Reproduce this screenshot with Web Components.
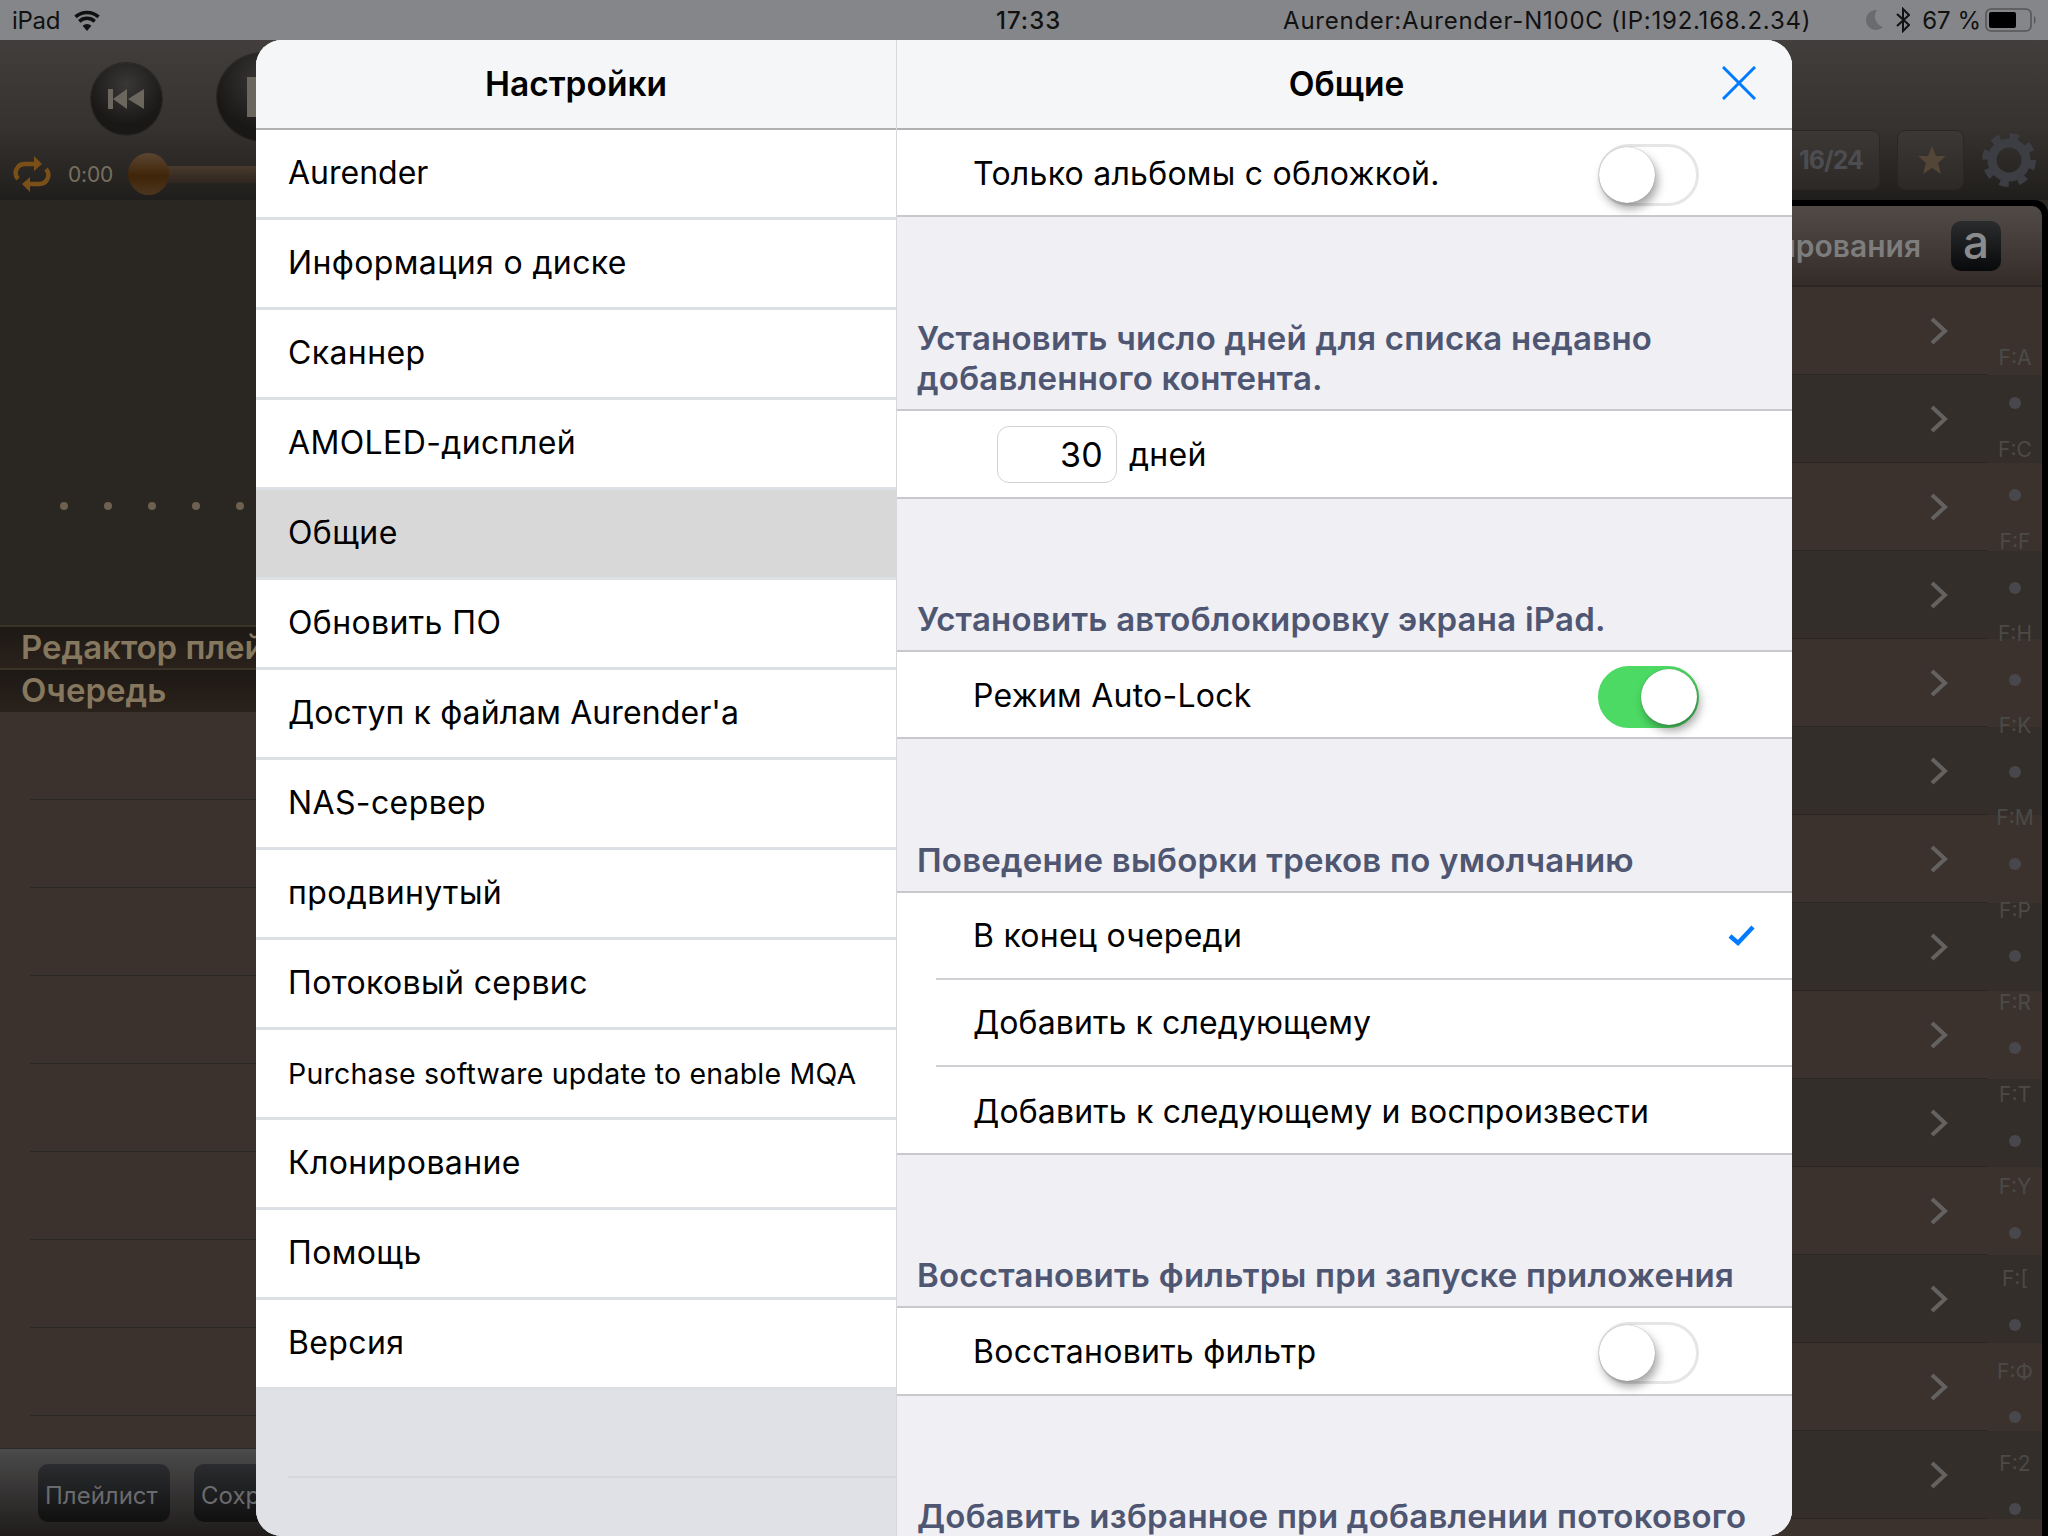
<!DOCTYPE html>
<html lang="ru">
<head>
<meta charset="utf-8">
<title>Настройки</title>
<style>
html,body{margin:0;padding:0;width:2048px;height:1536px;overflow:hidden;background:#2a2722;font-family:Inter,"Liberation Sans",sans-serif}
</style>
</head>
<body>
<ipad-status>
  <span slot="left">iPad</span>
  <span slot="center">17:33</span>
  <span slot="right">Aurender:Aurender-N100C (IP:192.168.2.34)</span>
</ipad-status>
<player-app></player-app>
<settings-modal>
  <span slot="left-title">Настройки</span>
  <span slot="right-title">Общие</span>
  <nav-row slot="nav" style="--ls:0">Aurender</nav-row>
  <nav-row slot="nav">Информация о диске</nav-row>
  <nav-row slot="nav">Сканнер</nav-row>
  <nav-row slot="nav">AMOLED-дисплей</nav-row>
  <nav-row slot="nav" selected>Общие</nav-row>
  <nav-row slot="nav">Обновить ПО</nav-row>
  <nav-row slot="nav" style="--ls:.1px">Доступ к файлам Aurender'а</nav-row>
  <nav-row slot="nav">NAS-сервер</nav-row>
  <nav-row slot="nav">продвинутый</nav-row>
  <nav-row slot="nav">Потоковый сервис</nav-row>
  <nav-row slot="nav" small>Purchase software update to enable MQA</nav-row>
  <nav-row slot="nav">Клонирование</nav-row>
  <nav-row slot="nav">Помощь</nav-row>
  <nav-row slot="nav">Версия</nav-row>

  <setting-row>Только альбомы с обложкой.<ios-switch slot="end"></ios-switch></setting-row>
  <section-head style="height:194px">Установить число дней для списка недавно добавленного контента.</section-head>
  <days-row>дней</days-row>
  <section-head>Установить автоблокировку экрана iPad.</section-head>
  <setting-row>Режим Auto-Lock<ios-switch slot="end" on></ios-switch></setting-row>
  <section-head>Поведение выборки треков по умолчанию</section-head>
  <setting-row inset>В конец очереди<check-mark slot="end"></check-mark></setting-row>
  <setting-row inset style="--ls:.1px">Добавить к следующему</setting-row>
  <setting-row style="--ls:.16px">Добавить к следующему и воспроизвести</setting-row>
  <section-head>Восстановить фильтры при запуске приложения</section-head>
  <setting-row>Восстановить фильтр<ios-switch slot="end"></ios-switch></setting-row>
  <section-head>Добавить избранное при добавлении потокового</section-head>
</settings-modal>

<script>
// each element just gets its markup set in an open shadow root
function define(tag, html) {
    customElements.define(tag, class extends HTMLElement {
        constructor() {
            super();
            this.attachShadow({mode: 'open'}).innerHTML = html;
        }
    });
}

define('ipad-status', `<style>
:host{display:flex;align-items:center;height:40px;background:#85868a;color:#111;font-size:24px;position:relative;padding:0 11px 0 12px;box-sizing:border-box}
.left{display:flex;align-items:center;gap:12px;letter-spacing:-.3px}
.center{position:absolute;left:996px;font-weight:500;letter-spacing:1px}
.right{margin-left:auto;display:flex;align-items:center}
.host{margin-right:55px;letter-spacing:.75px}
.pct{margin:0 4px 0 12px}
svg{display:block}
</style>
<div class="left"><slot name="left"></slot>
<svg width="30" height="23" viewBox="0 0 28 22"><path d="M14 21l-4.2-5a6 6 0 0 1 8.4 0z" fill="#111"/><path d="M6.6 12.2a11 11 0 0 1 14.8 0M3 8a16.5 16.5 0 0 1 22 0" transform="translate(0 -.4)" fill="none" stroke="#111" stroke-width="3.4"/></svg></div>
<div class="center"><slot name="center"></slot></div>
<div class="right"><span class="host"><slot name="right"></slot></span>
<svg width="18" height="22" viewBox="0 0 18 22" style="margin-right:12px"><path d="M11 1a10 10 0 1 0 6 17A11 11 0 0 1 11 1z" fill="#6a6b6f"/></svg>
<svg width="14" height="26" viewBox="0 0 14 26"><path d="M1 7l12 11-6 6V2l6 6L1 19" fill="none" stroke="#111" stroke-width="2"/></svg>
<span class="pct">67 %</span>
<svg width="52" height="24" viewBox="0 0 52 24"><rect x="1" y="1" width="45" height="22" rx="5" fill="none" stroke="#555" stroke-width="1.6"/><rect x="4" y="4" width="27" height="16" rx="2" fill="#000"/><path d="M49 8c2 1 2 7 0 8z" fill="#555"/></svg>
</div>`);

define('round-button', `<style>
:host{display:flex;align-items:center;justify-content:center;border-radius:50%;background:radial-gradient(circle at 50% 30%,#3a3836,#191816 65%);box-shadow:0 0 0 1px #2a2826}
</style><slot></slot>`);

define('player-top', `<style>
:host{display:flex;justify-content:space-between;height:160px;background:linear-gradient(#413e3d,#35322f 55%,#201e1c);overflow:hidden}
.ctl{display:flex;flex-direction:column}
.btns{display:flex;gap:55px;padding:23px 0 0 91px;height:78px;align-items:flex-start}
.seek{display:flex;align-items:center;margin-top:12px;padding-left:13px;height:42px}
.time{color:#77705f;font-size:21px;margin:0 17px 0 17px;letter-spacing:-.2px}
.knob{width:41px;height:42px;border-radius:50%;background:linear-gradient(#5c4632,#3f2508 55%,#4c3620);margin-right:-2px;position:relative}
.track{width:900px;height:17px;background:linear-gradient(#4a3a2c,#2e2620)}
.tools{display:flex;align-items:center;gap:17px;padding:90px 12px 0 0;height:60px}
.btn{height:60px;box-sizing:border-box;border:1px solid #2a2725;border-radius:8px;background:linear-gradient(#3c3835,#2c2926);display:flex;align-items:center;justify-content:center;color:#4c4d50;font-size:25px;font-weight:700;letter-spacing:-1px}
.count{width:120px;justify-content:flex-end;padding-right:16px}
.star{width:67px}
</style>
<div class="ctl">
<div class="btns">
<round-button style="width:71px;height:72px"><svg width="38" height="24" viewBox="0 0 38 24"><path d="M0 2h5v20H0zM19 2v20L5 12zM36 2v20L20 12z" fill="#6c675e"/></svg></round-button>
<round-button style="width:92px;height:88px;margin-top:-10px"><svg width="40" height="44" viewBox="0 0 40 44"><path d="M4 2h20v40H4z" fill="#6c675e"/></svg></round-button>
</div>
<div class="seek">
<svg width="38" height="42" viewBox="0 0 38 42"><g fill="none" stroke="#7a5018" stroke-width="4.5"><path d="M22 11H12a9 9 0 0 0-7 15"/><path d="M16 31h10a9 9 0 0 0 7-15"/></g><path d="M21 3l8 8-8 7zM17 39l-8-8 8-7z" fill="#7a5018"/></svg>
<span class="time">0:00</span><div class="knob" style="margin-left:-2px"></div><div class="track"></div>
</div>
</div>
<div class="tools">
<div class="btn count">16/24</div>
<div class="btn star"><svg width="30" height="30" viewBox="0 0 30 30" style="margin-left:2px"><path d="M15 1l4 10h10l-8 7 3 11-9-6-9 6 3-11-8-7h10z" fill="#544636"/></svg></div>
<svg width="54" height="54" viewBox="0 0 54 54" style="margin-left:1px"><circle cx="27" cy="27" r="17" fill="none" stroke="#3c3e44" stroke-width="9"/><circle cx="27" cy="27" r="23.5" fill="none" stroke="#3c3e44" stroke-width="7" stroke-dasharray="9 9.46"/></svg>
</div>`);

define('queue-list', `<style>
:host{display:block;flex:1;background:#3b322d;overflow:hidden}
.line{height:87px;margin-left:30px;border-bottom:1px solid #2b2723}
</style>` + '<div class="line"></div>'.repeat(8));

define('tab-band', `<style>
:host{display:block;height:43px;box-sizing:border-box;border-top:2px solid #3a3226;background:linear-gradient(#1d1915,#2a211b);padding-left:21px;color:#86785f;font-size:33px;font-weight:600;line-height:41px;white-space:nowrap}
.clip{display:block;width:235px;overflow:hidden}
</style><span class="clip"><slot></slot></span>`);

define('tool-button', `<style>
:host{display:flex;align-items:center;height:58px;box-sizing:border-box;padding:4px 0 0 7px;border-radius:10px;background:linear-gradient(#2b2c2f,#101010);color:#6a6b6e;font-size:24px;flex:none;overflow:hidden;white-space:nowrap}
</style><slot></slot>`);

define('left-pane', `<style>
:host{display:flex;flex-direction:column;width:1300px;flex:none}
.body{height:425px;background:#2a2722;display:flex;gap:36px;padding:302px 0 0 60px;box-sizing:border-box}
.body i{width:8px;height:8px;border-radius:50%;background:#6e6150}
.bar{display:flex;gap:24px;height:88px;box-sizing:border-box;padding:15px 0 0 38px;background:linear-gradient(#4b4b4b,#1f1c1b);border-top:1px solid #2b2825}
</style>
<div class="body"><i></i><i></i><i></i><i></i><i></i></div>
<tab-band>Редактор плей</tab-band>
<tab-band style="height:44px">Очередь</tab-band>
<queue-list></queue-list>
<div class="bar"><tool-button style="width:132px">Плейлист</tool-button><tool-button style="width:160px">Сохранить</tool-button></div>`);

define('index-rail', `<style>
:host{position:absolute;top:47px;right:0;width:54px;display:grid;grid-auto-rows:46.1px;justify-items:center;align-items:center;color:#4c4a47;font-size:21px}
i{width:12px;height:12px;border-radius:50%;background:#48484c}
</style>` + ['F:A','F:C','F:F','F:H','F:K','F:M','F:P','F:R','F:T','F:Y','F:[','F:Ф','F:2'].map(t => `<span>${t}</span><i></i>`).join(''));

define('album-row', `<style>
:host{display:flex;align-items:center;justify-content:flex-end;height:88px;box-sizing:border-box;padding-right:94px;position:relative}
:host::after{content:"";position:absolute;left:0;right:54px;bottom:0;height:1px;background:#2a2622}
</style><svg width="18" height="30" viewBox="0 0 18 30"><path d="M2 3l13 12L2 27" fill="none" stroke="#646261" stroke-width="4"/></svg>`);

define('right-pane', `<style>
:host{display:block;flex:1;background:#000;padding:6px 6px 0 0;border-top-right-radius:14px;overflow:hidden;box-sizing:border-box}
.title{height:81px;background:linear-gradient(#514b48,#352c28);border-top-right-radius:10px;border-bottom:2px solid #2a2522;box-sizing:border-box;display:flex;align-items:center;justify-content:flex-end;gap:30px;padding-right:41px;color:#7e7d7e;font-size:30px;font-weight:600}
.a{width:50px;height:50px;border-radius:10px;background:linear-gradient(#2b2c2e,#08090a);color:#8a8b8d;font-size:46px;font-weight:500;display:flex;align-items:center;justify-content:center;line-height:1;padding-bottom:10px;box-sizing:border-box}
.list{position:relative;height:1249px;background:repeating-linear-gradient(#3b322d 0 88px,#332e29 88px 176px);overflow:hidden}
</style>
<div class="title"><span>копирования</span><span class="a">a</span></div>
<div class="list">` + '<album-row></album-row>'.repeat(15) + `<index-rail></index-rail></div>`);

define('player-app', `<style>
:host{display:flex;flex-direction:column;height:1496px}
.main{display:flex;flex:1;min-height:0}
</style>
<player-top></player-top>
<div class="main"><left-pane></left-pane><right-pane></right-pane></div>`);

define('nav-row', `<style>
:host{display:flex;align-items:center;height:90px;box-sizing:border-box;flex:none;padding:0 0 2px 32px;background:#fff;border-bottom:3px solid #dcdfe4;color:#000;font-size:32px;letter-spacing:var(--ls,.38px);white-space:nowrap}
:host([selected]){background:#d8d8d8}
:host([small]){font-size:28.5px;letter-spacing:.22px;padding:1px 0 1px 32px}
</style><slot></slot>`);

define('setting-row', `<style>
:host{display:flex;align-items:center;justify-content:space-between;height:87.3px;box-sizing:border-box;flex:none;background:#fff;padding:2px 0 0 76px;border-bottom:2px solid #c9c9cd;color:#000;font-size:32px;letter-spacing:var(--ls,.25px);white-space:nowrap;position:relative}
:host([inset]){border-bottom:0;padding:0 0 2px 76px}
:host([inset])::after{content:"";position:absolute;left:39px;right:0;bottom:0;height:2px;background:#d0d0d4}
</style><slot></slot><slot name="end"></slot>`);

define('days-row', `<style>
:host{display:flex;align-items:center;gap:12px;height:87.3px;box-sizing:border-box;flex:none;background:#fff;padding:1px 0 0 100px;border-bottom:2px solid #c9c9cd;color:#000;font-size:32px;letter-spacing:.25px}
.input{width:120px;height:57px;box-sizing:border-box;border:1.5px solid #d2d2d2;border-radius:12px;display:flex;align-items:center;justify-content:flex-end;padding-right:13px;font-size:34px}
</style><div class="input">30</div><slot></slot>`);

define('section-head', `<style>
:host{display:flex;flex-direction:column;justify-content:flex-end;height:153.5px;box-sizing:border-box;flex:none;background:#efeff4;padding:0 20px 11px 20px;color:#4f5672;font-size:33px;letter-spacing:.23px;font-weight:600;line-height:40px;border-bottom:2px solid #c9c9cd}
</style><slot></slot>`);

define('ios-switch', `<style>
:host{display:block;width:101px;height:62px;box-sizing:border-box;border-radius:31px;border:3px solid #e6e6e6;background:#fff;margin:2px 93px 0 0;position:relative}
:host([on]){background:#4cd964;border-color:#4cd964}
.knob{position:absolute;left:-2px;top:0;width:56px;height:56px;border-radius:50%;background:#fff;box-shadow:3px 6px 10px rgba(0,0,0,.35),0 0 1px rgba(0,0,0,.4)}
:host([on]) .knob{left:40px}
</style><div class="knob"></div>`);

define('check-mark', `<style>
:host{display:block;margin-right:37px;line-height:0}
</style><svg width="28" height="24" viewBox="0 0 28 24"><path d="M3 12l8 7L26 3" fill="none" stroke="#007aff" stroke-width="4.4"/></svg>`);

define('close-x', `<style>
:host{display:block;position:absolute;right:36px;top:26px;line-height:0}
</style><svg width="34" height="34" viewBox="0 0 34 34"><path d="M1 1l32 32M33 1L1 33" fill="none" stroke="#007aff" stroke-width="3"/></svg>`);

define('settings-modal', `<style>
:host{display:grid;grid-template-columns:641px 1fr;position:absolute;left:256px;top:40px;width:1536px;height:1496px;border-radius:26px;overflow:hidden;background:#fff;color:#000}
.pane{display:flex;flex-direction:column;min-height:0;overflow:hidden;position:relative}
.left{background:#dfe1e6;border-right:1px solid #d8d8dc}
.head{height:90px;flex:none;box-sizing:border-box;background:#f5f6f7;border-bottom:2px solid #b0b0b3;display:flex;align-items:center;justify-content:center;font-size:33.5px;font-weight:600}
.right .head{padding-left:4px}
.blank{height:86.3px;margin-left:32px;border-bottom:2px solid #d4d6db;flex:none}
.right{background:#efeff4}
</style>
<div class="pane left">
<div class="head"><slot name="left-title"></slot></div>
<slot name="nav"></slot>
<div class="blank"></div>
</div>
<div class="pane right">
<div class="head"><slot name="right-title"></slot></div>
<close-x></close-x>
<slot></slot>
</div>`);
</script>
</body>
</html>
